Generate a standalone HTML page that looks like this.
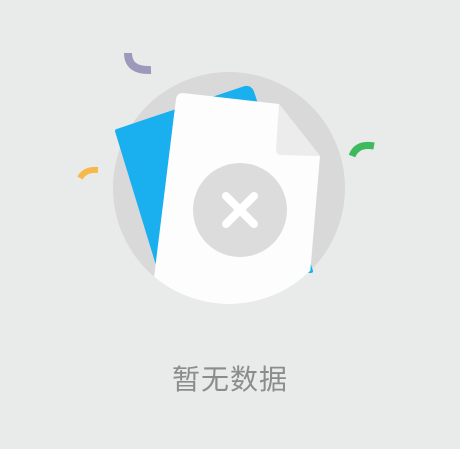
<!DOCTYPE html>
<html><head><meta charset="utf-8"><style>
html,body{margin:0;padding:0;width:460px;height:449px;background:#e8ebea;overflow:hidden}
.t{position:absolute;left:0;width:460px;top:358px;text-align:center;font:28px "Liberation Sans","Noto Sans CJK SC",sans-serif;color:#8c8c8c;letter-spacing:1px}
</style></head><body>
<svg width="460" height="449" style="position:absolute;left:0;top:0">
<defs><clipPath id="c"><circle cx="229" cy="188" r="116"/></clipPath></defs>
<circle cx="229" cy="188" r="116" fill="#d9d9d9"/>
<path d="M117 131 L245 88 Q250 87 252 92 L311 271 L158 265 Z" fill="#1ab0ef" stroke="#1ab0ef" stroke-width="4" stroke-linejoin="round"/>
<g clip-path="url(#c)">
<path d="M183 93 L279 104 L320 156 L307 310 L150 310 L176 99 Q177 93 183 93 Z" fill="#fdfdfd"/>
<path d="M279 104 L276 150 Q276 154 280 155 L320 156 Z" fill="#ececec"/>
</g>
<circle cx="240" cy="210" r="47" fill="#dcdcdc"/>
<path d="M226 196 L254 224 M254 196 L226 224" stroke="#fff" stroke-width="8" stroke-linecap="round"/>
<path d="M128 53 Q128 71 151 70" fill="none" stroke="#9e98bb" stroke-width="8"/>
<path d="M80 178 Q85 169 98 170" fill="none" stroke="#f6b94a" stroke-width="6"/>
<path d="M352 156 Q357 143 374 146" fill="none" stroke="#3fb95e" stroke-width="7"/>
</svg>
<div class="t">暂无数据</div>
</body></html>
